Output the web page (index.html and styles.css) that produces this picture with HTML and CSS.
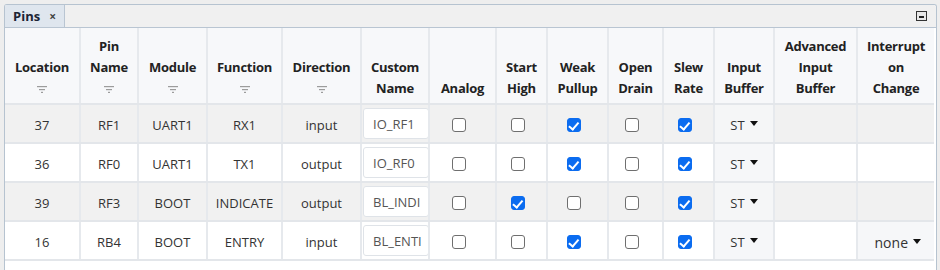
FILE: index.html
```html
<!DOCTYPE html>
<html>
<head>
<meta charset="utf-8">
<link rel="stylesheet" href="styles.css">
</head>
<body>
<div class="panel">
  <div class="titlebar">
    <div class="tab"><span class="tab-label">Pins</span><span class="tab-close">×</span></div>
    <div class="spacer"></div>
    <div class="min-btn"><span class="min-dash"></span></div>
  </div>
  <table class="grid">
    <colgroup>
      <col class="c75"><col class="c58"><col class="c69"><col class="c75"><col class="c79"><col class="c68"><col class="c67"><col class="c51"><col class="c61"><col class="c55"><col class="c51"><col class="c60"><col class="c83"><col class="c77">
    </colgroup>
    <thead>
      <tr>
        <th>Location<span class="filter"><svg width="10" height="7" viewBox="0 0 10 7"><rect x="0" y="0" width="10" height="1.2" fill="#9c9c9c"/><rect x="2" y="3" width="6" height="1.2" fill="#9c9c9c"/><rect x="4" y="5.8" width="2" height="1.2" fill="#9c9c9c"/></svg></span></th>
        <th>Pin<br>Name<span class="filter"><svg width="10" height="7" viewBox="0 0 10 7"><rect x="0" y="0" width="10" height="1.2" fill="#9c9c9c"/><rect x="2" y="3" width="6" height="1.2" fill="#9c9c9c"/><rect x="4" y="5.8" width="2" height="1.2" fill="#9c9c9c"/></svg></span></th>
        <th>Module<span class="filter"><svg width="10" height="7" viewBox="0 0 10 7"><rect x="0" y="0" width="10" height="1.2" fill="#9c9c9c"/><rect x="2" y="3" width="6" height="1.2" fill="#9c9c9c"/><rect x="4" y="5.8" width="2" height="1.2" fill="#9c9c9c"/></svg></span></th>
        <th>Function<span class="filter"><svg width="10" height="7" viewBox="0 0 10 7"><rect x="0" y="0" width="10" height="1.2" fill="#9c9c9c"/><rect x="2" y="3" width="6" height="1.2" fill="#9c9c9c"/><rect x="4" y="5.8" width="2" height="1.2" fill="#9c9c9c"/></svg></span></th>
        <th>Direction<span class="filter"><svg width="10" height="7" viewBox="0 0 10 7"><rect x="0" y="0" width="10" height="1.2" fill="#9c9c9c"/><rect x="2" y="3" width="6" height="1.2" fill="#9c9c9c"/><rect x="4" y="5.8" width="2" height="1.2" fill="#9c9c9c"/></svg></span></th>
        <th>Custom<br>Name</th>
        <th>Analog</th>
        <th>Start<br>High</th>
        <th>Weak<br>Pullup</th>
        <th>Open<br>Drain</th>
        <th>Slew<br>Rate</th>
        <th>Input<br>Buffer</th>
        <th>Advanced<br>Input<br>Buffer</th>
        <th>Interrupt<br>on<br>Change</th>
      </tr>
    </thead>
    <tbody>
      <tr class="alt">
        <td>37</td><td>RF1</td><td>UART1</td><td>RX1</td><td>input</td>
        <td class="name-cell"><div class="name-box">IO_RF1</div></td>
        <td class="chk"><span class="cb"></span></td><td class="chk"><span class="cb"></span></td><td class="chk"><span class="cb on"></span></td><td class="chk"><span class="cb"></span></td><td class="chk"><span class="cb on"></span></td>
        <td class="drop">ST<span class="caret"></span></td><td></td><td></td>
      </tr>
      <tr>
        <td>36</td><td>RF0</td><td>UART1</td><td>TX1</td><td>output</td>
        <td class="name-cell"><div class="name-box">IO_RF0</div></td>
        <td class="chk"><span class="cb"></span></td><td class="chk"><span class="cb"></span></td><td class="chk"><span class="cb on"></span></td><td class="chk"><span class="cb"></span></td><td class="chk"><span class="cb on"></span></td>
        <td class="drop">ST<span class="caret"></span></td><td></td><td></td>
      </tr>
      <tr class="alt">
        <td>39</td><td>RF3</td><td>BOOT</td><td>INDICATE</td><td>output</td>
        <td class="name-cell"><div class="name-box">BL_INDI</div></td>
        <td class="chk"><span class="cb"></span></td><td class="chk"><span class="cb on"></span></td><td class="chk"><span class="cb"></span></td><td class="chk"><span class="cb"></span></td><td class="chk"><span class="cb on"></span></td>
        <td class="drop">ST<span class="caret"></span></td><td></td><td></td>
      </tr>
      <tr>
        <td>16</td><td>RB4</td><td>BOOT</td><td>ENTRY</td><td>input</td>
        <td class="name-cell"><div class="name-box">BL_ENTI</div></td>
        <td class="chk"><span class="cb"></span></td><td class="chk"><span class="cb"></span></td><td class="chk"><span class="cb on"></span></td><td class="chk"><span class="cb"></span></td><td class="chk"><span class="cb on"></span></td>
        <td class="drop">ST<span class="caret"></span></td><td></td><td class="drop right">none<span class="caret"></span></td>
      </tr>
    </tbody>
  </table>
</div>
</body>
</html>
```
FILE: styles.css
```css
html, body {
  margin: 0;
  padding: 0;
}
body {
  background: #eeeeee;
  font-family: "Open Sans", "Noto Sans", sans-serif;
  color: #333;
  width: 940px;
  height: 270px;
  overflow: hidden;
}
.panel {
  margin: 4px 3px 0 4px;
  height: 266px;
  background: #ffffff;
  border: 1px solid #b6c3d0;
  border-bottom: none;
  border-radius: 3px 3px 0 0;
  overflow: hidden;
}
.titlebar {
  display: flex;
  align-items: stretch;
  height: 22px;
  background: #f0f0f0;
  border-bottom: 1px solid #b9c5d2;
}
.tab {
  display: flex;
  align-items: center;
  gap: 9px;
  padding: 0 8px 0 8px;
  background: #dfe6ee;
  border-right: 1px solid #b9c5d2;
  font-weight: 700;
  font-size: 13px;
  color: #1b2434;
}
.tab-close {
  font-size: 12px;
  font-weight: 700;
  color: #444;
}
.spacer { flex: 1; }
.min-btn {
  align-self: center;
  width: 9px;
  height: 8px;
  border: 1px solid #333;
  background: #e8e8e8;
  margin-right: 9px;
  display: flex;
  align-items: flex-end;
  justify-content: center;
}
.min-dash {
  width: 5px;
  height: 2px;
  background: #222;
  margin-bottom: 2px;
}
.grid {
  table-layout: fixed;
  border-collapse: collapse;
  width: 929px;
}
.c51 { width: 51px; }
.c55 { width: 55px; }
.c58 { width: 58px; }
.c60 { width: 60px; }
.c61 { width: 61px; }
.c67 { width: 67px; }
.c68 { width: 68px; }
.c69 { width: 69px; }
.c75 { width: 75px; }
.c77 { width: 77px; }
.c79 { width: 79px; }
.c83 { width: 83px; }
.grid th {
  height: 76px;
  background: #f7f8fa;
  font-weight: 700;
  font-size: 13px;
  letter-spacing: -0.25px;
  line-height: 21px;
  color: #222;
  vertical-align: bottom;
  text-align: center;
  padding: 0 0 4px;
  border-right: 2px solid #e6e9ed;
  border-bottom: 2px solid #e3e6ea;
  box-sizing: border-box;
  white-space: nowrap;
}
.filter {
  display: flex;
  height: 21px;
  align-items: center;
  justify-content: center;
  padding-top: 2px;
  box-sizing: border-box;
}
.filter svg { display: block; }
.grid td {
  height: 39px;
  padding: 3px 0 0;
  font-size: 13px;
  color: #333;
  text-align: center;
  vertical-align: middle;
  border-right: 2px solid #e6e9ed;
  border-bottom: 2px solid #e3e6ea;
  box-sizing: border-box;
  white-space: nowrap;
  overflow: hidden;
}
.grid th:last-child, .grid td:last-child { border-right: none; }
.grid tr.alt td { background: #f1f1f1; }
.grid td.drop { background: #f6f7f9; }
.grid tr.alt td.drop { background: #f5f6f7; }
.grid td.name-cell { padding: 0 0 0 1px; }
.grid td.chk { padding: 0 8px 0 0; }
.name-box {
  width: 66px;
  height: 31px;
  line-height: 30px;
  background: #fff;
  border: 1px solid #dfe3e8;
  border-radius: 3px;
  color: #555;
  text-align: left;
  padding-left: 9px;
  overflow: hidden;
  white-space: nowrap;
  box-sizing: border-box;
}
.cb {
  display: inline-block;
  width: 12px;
  height: 12px;
  border: 1.5px solid #6f6f6f;
  border-radius: 3px;
  background: #fff;
  vertical-align: middle;
  box-sizing: content-box;
  position: relative;
}
.cb.on {
  background: #0b6cf0;
  border-color: #0b6cf0;
}
.cb.on::after {
  content: "";
  position: absolute;
  left: 3.5px;
  top: 0.5px;
  width: 3.5px;
  height: 7.5px;
  border: solid #fff;
  border-width: 0 2px 2px 0;
  transform: rotate(40deg);
}
.caret {
  display: inline-block;
  width: 0;
  height: 0;
  border-left: 4.5px solid transparent;
  border-right: 4.5px solid transparent;
  border-top: 5px solid #111;
  margin-left: 5px;
  vertical-align: 4px;
}
.grid td.right { text-align: right; padding-right: 13px; font-size: 14px; }
```
